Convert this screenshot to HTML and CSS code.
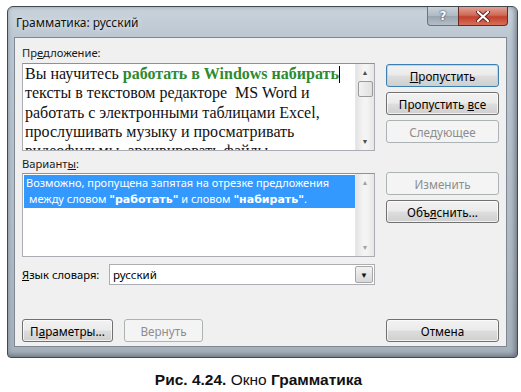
FILE: index.html
```html
<!DOCTYPE html>
<html lang="ru">
<head>
    <meta charset="UTF-8">
    <title>Грамматика: русский</title>
    <link rel="stylesheet" href="styles.css">
</head>
<body>
    <div class="page">
        <div class="window">
            <div class="titlebar">
                <div class="title">Грамматика: русский</div>
                <div class="controls">
                    <div class="ctl help">?</div>
                    <div class="ctl close">
                        <svg width="14" height="11" viewBox="0 0 14 11">
                            <path d="M2 1 L12 10 M12 1 L2 10" stroke="#5a2020" stroke-width="4" stroke-linecap="round"/>
                            <path d="M2 1 L12 10 M12 1 L2 10" stroke="#fff" stroke-width="2.2" stroke-linecap="round"/>
                        </svg>
                    </div>
                </div>
            </div>

            <div class="client">
                <div class="label">Пр<u>е</u>дложение:</div>
                <div class="row">
                    <div class="box sentence">
                        <div class="sentence-text">
                            Вы научитесь <span class="err">работать в Windows набирать</span><span class="caret"></span>
                            тексты в текстовом редакторе &nbsp;MS Word и
                            работать с электронными таблицами Excel,
                            прослушивать музыку и просматривать
                            видеофильмы, архивировать файлы
                        </div>
                        <div class="scrollbar">
                            <div class="arrow">▲</div>
                            <div class="thumb"></div>
                            <div class="track"></div>
                            <div class="arrow">▼</div>
                        </div>
                    </div>
                    <div class="buttons">
                        <button class="btn default"><u>П</u>ропустить</button>
                        <button class="btn">Пропустить <u>в</u>се</button>
                        <button class="btn disabled">Следующее</button>
                    </div>
                </div>

                <div class="label gap">Вариант<u>ы</u>:</div>
                <div class="row">
                    <div class="box variants">
                        <div class="variants-list">
                            <div class="selected">
                                <div>Возможно, пропущена запятая на отрезке предложения</div>
                                <div class="second">между словом <b>"работать"</b> и словом <b>"набирать"</b>.</div>
                            </div>
                        </div>
                        <div class="scrollbar plain">
                            <div class="arrow dim">▲</div>
                            <div class="track"></div>
                            <div class="arrow dim">▼</div>
                        </div>
                    </div>
                    <div class="buttons up">
                        <button class="btn disabled">Изменить</button>
                        <button class="btn">Объ<u>я</u>снить...</button>
                    </div>
                </div>

                <div class="lang-row">
                    <div class="lang-label"><u>Я</u>зык словаря:</div>
                    <div class="combo">
                        <div class="combo-value">русский</div>
                        <div class="combo-btn">▼</div>
                    </div>
                </div>

                <div class="footer">
                    <div class="footer-left">
                        <button class="btn small">П<u>а</u>раметры...</button>
                        <button class="btn small disabled">Вернуть</button>
                    </div>
                    <button class="btn">Отмена</button>
                </div>
            </div>
        </div>

        <div class="caption"><b>Рис. 4.24.</b> Окно <b>Грамматика</b></div>
    </div>
</body>
</html>
```

FILE: styles.css
```css
* {
    margin: 0;
    padding: 0;
    box-sizing: border-box;
}

body {
    background: #fff;
    font-family: 'Noto Sans', 'Liberation Sans', sans-serif;
    font-size: 11px;
    color: #000;
}

.page {
    padding: 6px 0 0 7px;
}

.window {
    width: 511px;
    height: 352px;
    border: 1px solid #44494e;
    border-radius: 6px 6px 4px 4px;
    background: linear-gradient(180deg, #c9d3dc 0%, #b9c5d0 10%, #b1bcc7 60%, #a5b0bb 100%);
    box-shadow: inset -3px 0 4px rgba(60, 70, 80, 0.35), inset 0 -3px 4px rgba(60, 70, 80, 0.35);
    padding: 0 10px 10px 6px;
    display: flex;
    flex-direction: column;
}

.titlebar {
    height: 30px;
    display: flex;
    justify-content: space-between;
    align-items: flex-start;
}

.title {
    padding: 7px 0 0 2px;
    font-size: 12px;
    color: #111;
    text-shadow: 0 0 6px rgba(255, 255, 255, 0.9);
}

.controls {
    display: flex;
    margin-right: -1px;
}

.ctl {
    height: 19px;
    display: flex;
    align-items: center;
    justify-content: center;
    border: 1px solid #6b747c;
    border-top: none;
}

.help {
    width: 31px;
    border-radius: 0 0 0 4px;
    border-right: none;
    background: linear-gradient(180deg, #c9d2da 0%, #aeb9c3 50%, #98a4af 51%, #b3bec8 100%);
    color: #fff;
    font-family: 'DejaVu Sans', sans-serif;
    font-weight: bold;
    font-size: 12px;
    text-shadow: 0 0 2px #404850, 0 0 1px #404850;
}

.close {
    width: 50px;
    border-radius: 0 0 4px 0;
    border-color: #6a2a22;
    background: linear-gradient(180deg, #e0a196 0%, #cf6a58 45%, #c2402c 55%, #d6705a 100%);
}

.client {
    flex: 1;
    background: #f0f0f0;
    border: 1px solid #7d8893;
    padding: 7px 7px 4px 7px;
    display: flex;
    flex-direction: column;
}

.label {
    height: 18px;
    line-height: 15px;
    font-size: 11.2px;
    color: #1a1a1a;
}

.label.gap {
    margin-top: 5px;
    height: 17px;
}

.row {
    display: flex;
    gap: 11px;
}

.box {
    width: 353px;
    border: 1px solid #abadb3;
    border-top-color: #8e9196;
    background: #fff;
    display: flex;
    overflow: hidden;
}

.sentence {
    height: 88px;
}

.sentence-text {
    flex: 1;
    padding: 0 2px;
    font-family: 'Liberation Serif', serif;
    font-size: 16px;
    line-height: 19.3px;
    color: #111;
    overflow: hidden;
}

.err {
    color: #2e8a2e;
    font-weight: bold;
}

.caret {
    display: inline-block;
    width: 1px;
    height: 17px;
    background: #000;
    vertical-align: -4px;
}

.scrollbar {
    width: 19px;
    flex-shrink: 0;
    background: linear-gradient(90deg, #e3e3e3, #f4f4f4 40%, #f4f4f4 60%, #e6e6e6);
    border-left: 1px solid #e8e8e8;
    display: flex;
    flex-direction: column;
    align-items: center;
}

.arrow {
    height: 17px;
    line-height: 17px;
    font-size: 7px;
    color: #4d4d4d;
}

.arrow.dim {
    color: #a3a3a3;
}

.thumb {
    width: 15px;
    height: 16px;
    border: 1px solid #9a9a9a;
    border-radius: 2px;
    background: linear-gradient(90deg, #f2f2f2, #e0e0e0);
}

.track {
    flex: 1;
}

.buttons {
    display: flex;
    flex-direction: column;
    gap: 5px;
    padding-top: 1px;
}

.buttons.up {
    padding-top: 0;
    margin-top: -1px;
}

.btn {
    width: 113px;
    height: 23px;
    border: 1px solid #707070;
    border-radius: 3px;
    background: linear-gradient(180deg, #f2f2f2 0%, #ebebeb 48%, #dddddd 52%, #cfcfcf 100%);
    box-shadow: inset 0 0 0 1px rgba(255, 255, 255, 0.7);
    font-family: 'Noto Sans', 'Liberation Sans', sans-serif;
    font-size: 11.7px;
    color: #000;
}

.btn.default {
    border-color: #3c7fb1;
    box-shadow: inset 0 0 0 1px #a8dcf4;
}

.btn.disabled {
    border-color: #adb2b5;
    background: #f4f4f4;
    box-shadow: none;
    color: #8d8d8d;
}

.btn.small {
    width: 91px;
}

.btn.small.disabled {
    width: 79px;
}

.variants {
    height: 84px;
}

.variants-list {
    flex: 1;
    padding: 1px 0 0 1px;
}

.selected {
    background: #3399ff;
    color: #fff;
    padding: 0 2px;
    line-height: 16px;
    font-size: 11px;
}

.selected b {
    font-family: 'DejaVu Sans', sans-serif;
    font-size: 11px;
}

.second {
    padding-left: 3px;
}

.lang-row {
    margin-top: 7px;
    display: flex;
    align-items: center;
}

.lang-label {
    width: 87px;
    font-size: 11.2px;
}

.combo {
    width: 266px;
    height: 21px;
    border: 1px solid #abadb3;
    background: #fff;
    display: flex;
    align-items: stretch;
}

.combo-value {
    flex: 1;
    padding: 2px 0 0 3px;
    font-size: 11.5px;
}

.combo-btn {
    width: 18px;
    margin: 1px;
    border: 1px solid #a7a7a7;
    border-radius: 2px;
    background: linear-gradient(180deg, #f2f2f2, #d8d8d8);
    font-size: 8px;
    line-height: 16px;
    text-align: center;
    color: #111;
}

.footer {
    margin-top: auto;
    display: flex;
    justify-content: space-between;
}

.footer-left {
    display: flex;
    gap: 11px;
}

.caption {
    width: 503px;
    margin-top: 13px;
    text-align: center;
    font-family: 'Liberation Sans', Arial, sans-serif;
    font-size: 15.5px;
    color: #111;
}
```
